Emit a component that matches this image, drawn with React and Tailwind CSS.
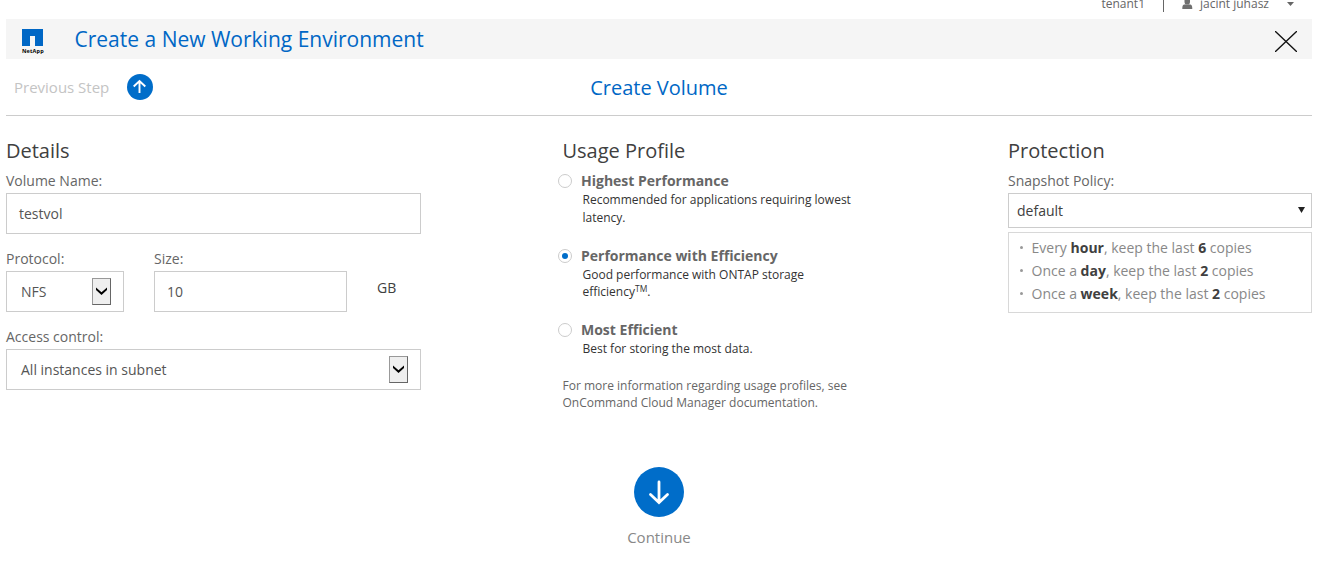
function NetAppLogo() {
  return (
    <div className="flex w-[23px] flex-col items-start">
      <svg className="ml-[1px] block h-[17px] w-[21px]" viewBox="0 0 21 17">
        <path d="M0 0H21V17H13V7H8V17H0Z" fill="#0067c5" />
      </svg>
      <span className="mt-[1px] ml-[1px] text-[5.5px] leading-[8px] font-bold tracking-[0.15px] whitespace-nowrap text-black">NetApp</span>
    </div>
  );
}

function SelectButton() {
  return (
    <span className="flex h-[27px] w-[19px] items-center justify-center border border-t-[#999] border-r-[#666] border-b-[#666] border-l-[#999] bg-[#efefef]">
      <svg className="mb-[2px] block h-[8px] w-[11px]" viewBox="0 0 11 8">
        <path d="M0 0.5L5.5 5.2L11 0.5V2.9L5.5 8L0 2.9Z" fill="#000" />
      </svg>
    </span>
  );
}

function Heading({ children }) {
  return <h2 className="h-[28px] text-[20px] leading-[28px] whitespace-nowrap text-[#404040]">{children}</h2>;
}

function Label({ children }) {
  return <div className="h-[22px] text-[14px] leading-[20px] whitespace-nowrap text-[#666]">{children}</div>;
}

function Option({ title, checked, className, children }) {
  return (
    <div className={`flex ${className}`}>
      <span className="mt-[3px] flex size-[14px] shrink-0 items-center justify-center rounded-full border border-[#ccc]">
        {checked && <span className="size-[6px] rounded-full bg-[#006dc9]" />}
      </span>
      <div className="ml-[9px]">
        <div className="text-[14px] leading-[20px] font-bold whitespace-nowrap text-[#666]">{title}</div>
        <div className="pl-[1.5px] text-[12px] whitespace-nowrap text-[#333]">{children}</div>
      </div>
    </div>
  );
}

function Policy({ every, period, count }) {
  return (
    <li className="flex h-[23px] items-center">
      <span className="mr-[9px] size-[3px] rounded-full bg-[#999]" />
      <span className="whitespace-nowrap">
        {every} <b className="text-[#404040]">{period}</b>, keep the last <b className="text-[#404040]">{count}</b> copies
      </span>
    </li>
  );
}

export default function App() {
  return (
    <div className="h-[586px] w-[1331px] overflow-hidden bg-white pr-[19px] pl-[6px] font-['Open_Sans',sans-serif] text-[14px] text-[#555]">
      <div className="flex h-[19px] items-start justify-end overflow-hidden text-[12px] leading-[16px] text-[#666]">
        <span className="-mt-[4px] whitespace-nowrap">tenant1</span>
        <span className="ml-[18px] h-[12px] w-px bg-[#666]" />
        <svg className="ml-[18px] block h-[9px] w-[11px]" viewBox="0 0 11 9">
          <path d="M2.500 0H8V2C8 3.200 7.300 3.800 7 4.300H3.500C3.200 3.800 2.500 3.200 2.500 2ZM2 4.500H8.500C9.800 5 10.300 6 10.300 9H0.300C0.300 6 0.800 5 2 4.500Z" fill="#707070" />
        </svg>
        <span className="-mt-[4px] ml-[7px] whitespace-nowrap">jacint juhasz</span>
        <svg className="mt-[2px] mr-[18px] ml-[18px] block h-[4px] w-[7px]" viewBox="0 0 7 4">
          <path d="M0 0H7L3.500 4Z" fill="#666" />
        </svg>
      </div>

      <header className="flex h-[40px] items-start bg-[#f5f5f5]">
        <div className="mt-[10px] ml-[15px]">
          <NetAppLogo />
        </div>
        <h1 className="mt-[5px] ml-[30.5px] text-[21px] leading-[30px] whitespace-nowrap text-[#0067c5]">Create a New Working Environment</h1>
        <svg className="mt-[12px] mr-[15px] ml-auto block h-[21px] w-[22px]" viewBox="0 0 22 21">
          <path d="M0 0L22 21M22 0L0 21" stroke="#111" strokeWidth="1.300" fill="none" />
        </svg>
      </header>

      <div className="grid h-[57px] grid-cols-[1fr_auto_1fr] items-center border-b border-[#ccc]">
        <div className="flex items-center pl-[8px]">
          <span className="text-[15px] leading-[20px] text-[#c4c4c4]">Previous Step</span>
          <svg className="ml-[18px] block size-[26px]" viewBox="0 0 26 26">
            <circle cx="13" cy="13" r="13" fill="#006dc9" />
            <path d="M12.500 19V7.500M6.700 12.500L12.500 7L18.300 12.500" stroke="#fff" strokeWidth="1.900" fill="none" />
          </svg>
        </div>
        <div className="mt-[2px] text-[20px] leading-[28px] whitespace-nowrap text-[#0067c5]">Create Volume</div>
      </div>

      <main className="flex h-[351px] pt-[21px]">
        <section className="w-[415px] shrink-0">
          <Heading>Details</Heading>
          <div className="mt-[6px]">
            <Label>Volume Name:</Label>
            <div className="flex h-[41px] items-center border border-[#ccc] pl-[12px]">testvol</div>
          </div>
          <div className="mt-[15px] flex">
            <div className="w-[118px]">
              <Label>Protocol:</Label>
              <div className="flex h-[41px] items-center justify-between border border-[#ccc] pr-[12px] pl-[14px]">
                NFS
                <SelectButton />
              </div>
            </div>
            <div className="ml-[30px] w-[193px]">
              <Label>Size:</Label>
              <div className="flex h-[41px] items-center border border-[#ccc] pl-[12px]">10</div>
            </div>
            <span className="mt-[29px] ml-[30px] leading-[20px] text-[#404040]">GB</span>
          </div>
          <div className="mt-[15px]">
            <Label>Access control:</Label>
            <div className="flex h-[41px] items-center justify-between border border-[#ccc] pr-[12px] pl-[14px]">
              All instances in subnet
              <SelectButton />
            </div>
          </div>
        </section>

        <section className="ml-[137px] w-[304px] shrink-0">
          <div className="pl-[4.5px]">
            <Heading>Usage Profile</Heading>
          </div>
          <Option title="Highest Performance" className="mt-[6px] h-[75px]">
            <p className="leading-[18px]">
              Recommended for applications requiring lowest
              <br />
              latency.
            </p>
          </Option>
          <Option title="Performance with Efficiency" checked className="h-[74px]">
            <p className="leading-[17px]">
              Good performance with ONTAP storage
              <br />
              efficiency<sup className="-top-[4px] text-[8.5px] leading-[0]">TM</sup>.
            </p>
          </Option>
          <Option title="Most Efficient" className="h-[57px]">
            <p className="leading-[17px]">Best for storing the most data.</p>
          </Option>
          <p className="pl-[4.5px] text-[12px] leading-[17px] whitespace-nowrap text-[#666]">
            For more information regarding usage profiles, see
            <br />
            OnCommand Cloud Manager documentation.
          </p>
        </section>

        <section className="ml-auto w-[304px] shrink-0">
          <Heading>Protection</Heading>
          <div className="mt-[6px]">
            <Label>Snapshot Policy:</Label>
            <div className="flex h-[35px] items-center justify-between border border-[#ccc] pr-[6px] pl-[8px] text-[#404040]">
              default
              <svg className="mb-[2px] block h-[6px] w-[7px]" viewBox="0 0 7 6">
                <path d="M0 0H7L3.500 6Z" fill="#222" />
              </svg>
            </div>
          </div>
          <ul className="mt-[4px] h-[81px] border border-[#d8d8d8] pt-[3px] pl-[10.5px] text-[#888]">
            <Policy every="Every" period="hour" count="6" />
            <Policy every="Once a" period="day" count="2" />
            <Policy every="Once a" period="week" count="2" />
          </ul>
        </section>
      </main>

      <footer className="flex flex-col items-center">
        <svg className="block size-[50px]" viewBox="0 0 50 50">
          <circle cx="25" cy="25" r="25" fill="#006dc9" />
          <path d="M25 15V35.500M16.500 27.500L25 35.500L33.500 27.500" stroke="#fff" strokeWidth="2.800" strokeLinecap="round" fill="none" />
        </svg>
        <span className="mt-[10px] text-[15px] leading-[20px] text-[#888]">Continue</span>
      </footer>
    </div>
  );
}
